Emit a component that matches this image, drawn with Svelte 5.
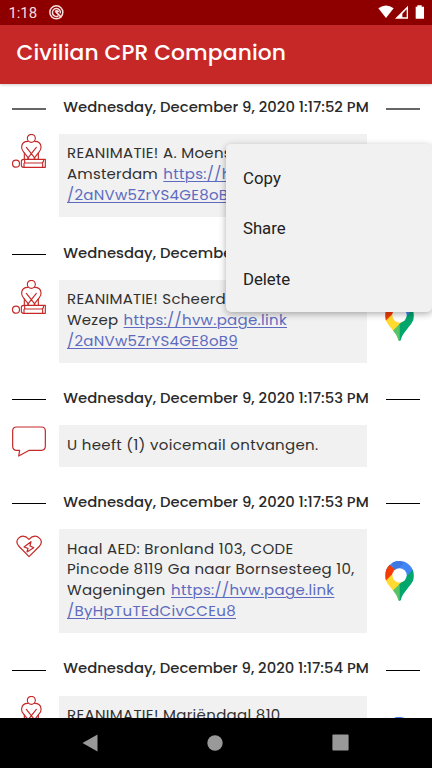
<script>
  const url = 'https://hvw.page.link';
  const entries = [
    {
      time: '1:17:52 PM', icon: 'cpr', pin: true, faded: true,
      lines: [
        [{ t: 'REANIMATIE! A. Moens', w: 165 }],
        [{ t: 'Amsterdam', w: 91 }, { t: url, w: 163.4, link: true }],
        [{ t: '/2aNVw5ZrYS4GE8oB9', w: 171, link: true }]
      ]
    },
    {
      time: '1:17:53 PM', icon: 'cpr', pin: true,
      lines: [
        [{ t: 'REANIMATIE! Scheerd', w: 159 }],
        [{ t: 'Wezep', w: 51.3 }, { t: url, w: 163.4, link: true }],
        [{ t: '/2aNVw5ZrYS4GE8oB9', w: 171, link: true }]
      ]
    },
    {
      time: '1:17:53 PM', icon: 'chat', pin: false,
      lines: [[{ t: 'U heeft (1) voicemail ontvangen.', w: 251.5 }]]
    },
    {
      time: '1:17:53 PM', icon: 'heart', pin: true,
      lines: [
        [{ t: 'Haal AED: Bronland 103, CODE', w: 226.5 }],
        [{ t: 'Pincode 8119 Ga naar Bornsesteeg 10,', w: 287.5 }],
        [{ t: 'Wageningen', w: 98.7 }, { t: url, w: 163.4, link: true }],
        [{ t: '/ByHpTuTEdCivCCEu8', w: 169, link: true }]
      ]
    },
    {
      time: '1:17:54 PM', icon: 'cpr', pin: true,
      lines: [
        [{ t: 'REANIMATIE! Mariëndaal 810', w: 213.5 }],
        [],
        []
      ]
    }
  ];

  // Tracks the text out so that it fills the given width.
  function fit(node, width) {
    const natural = node.getBoundingClientRect().width;
    const spacing = (width - natural) / node.textContent.length;
    node.style.letterSpacing = `${spacing}px`;
  }
</script>

<div class="screen">
  <div class="status">
    <span class="clock" use:fit={28.5}>1:18</span>
    <svg class="badge" viewBox="0 0 45 45">
      <g fill="none" stroke="#f6dede">
        <circle cx="22" cy="22" r="19.5" stroke-width="4.500" />
        <path d="M28 33A12 12 0 1 1 34 25" stroke-width="4.500" />
        <path d="M18 20Q24 15 29 21M20 20L37 37" stroke-width="5" />
      </g>
    </svg>
    <svg class="signals" viewBox="0 0 140 44">
      <path fill="#fff" d="M1 10Q24-7 47 10L24 39Z" />
      <path fill="#fff" fill-rule="evenodd" d="M90 2V41H51ZM86 13L73 26V37H86Z" />
      <path fill="#fff" d="M113 5H118V1H131V5H138V41H113Z" />
    </svg>
  </div>
  <header><h1><span use:fit={269.5}>Civilian CPR Companion</span></h1></header>

  <main>
    {#each entries as e}
      <section>
        <div class="date">
          <i class:faded={e.faded}></i>
          <span use:fit={305.5}>Wednesday, December 9, 2020 {e.time}</span>
          <i class:faded={e.faded}></i>
        </div>
        <div class="row">
          <div class="icon">
            {#if e.icon === 'cpr'}
              <svg width="34" height="34" viewBox="0 0 102 102">
                <g fill="none" stroke="#c62828" stroke-width="3.400" stroke-linejoin="round" stroke-linecap="round">
                  <circle cx="58" cy="13" r="12" />
                  <path d="M48 22Q30 22 29 38Q28 46 34 53L50 73M68 22Q86 22 87 38Q88 46 82 53L66 73" />
                  <path d="M43 40L58 59L73 40M58 59L69 73M58 59L47 73M37 57V74M79 57V74" />
                  <circle cx="12" cy="89" r="10.500" />
                  <path d="M35 76H100V100H35Q28 100 28 93V83Q28 76 35 76Z" />
                  <path d="M38 77V87H89Q94 87 95 78M36 88V99M92 89V99" />
                </g>
              </svg>
            {:else if e.icon === 'chat'}
              <svg width="34" height="32" viewBox="0 0 102 96">
                <path d="M14 6H88Q100 6 100 18V64Q100 76 88 76H52L20 93L23 76H14Q2 76 2 64V18Q2 6 14 6Z" fill="none" stroke="#c62828" stroke-width="3.600" stroke-linejoin="round" />
              </svg>
            {:else}
              <svg width="34" height="30" viewBox="0 0 102 90">
                <g fill="none" stroke="#c62828" stroke-width="3.600" stroke-linejoin="round">
                  <path d="M51 83L20 51Q10 38 19 28Q34 14 51 31Q68 14 83 28Q93 38 83 51Z" />
                  <path d="M57 38L36 54L48 58L45 69L65 56L54 51Z" />
                </g>
              </svg>
            {/if}
          </div>
          <div class="card">
            {#each e.lines as line}
              <div class="line">
                {#each line as part}
                  {#if part.link}
                    <a href={url} use:fit={part.w}>{part.t}</a>
                  {:else}
                    <span use:fit={part.w}>{part.t}</span>
                  {/if}
                {/each}
              </div>
            {/each}
          </div>
          {#if e.pin}
            <svg class="pin" viewBox="0 0 86 120">
              <defs>
                <clipPath id="drop">
                  <path d="M43 0C67 0 86 19 86 43C86 62 77 70 66 84C55 98 49 106 47 117Q43 123 39 117C37 106 31 98 20 84C9 70 0 62 0 43C0 19 19 0 43 0Z" />
                </clipPath>
              </defs>
              <g clip-path="url(#drop)">
                <path fill="#4285f4" d="M0 0H86V60H0Z" />
                <path fill="#3b78e0" d="M18 0H43L56 5L36 27H28Z" />
                <path fill="#f43b05" d="M0 0H2L30 27L36 30L0 63Z" />
                <path fill="#ffda2f" d="M0 61L30 31L60 52L43 71L22 92L0 80Z" />
                <path fill="#57c467" d="M20 92L44 68V120H20Z" />
                <path fill="#00a66c" d="M86 22V120H43V70Z" />
              </g>
              <circle cx="43" cy="43" r="21.500" fill="#fff" />
            </svg>
          {/if}
        </div>
      </section>
    {/each}
  </main>

  <nav>
    <svg width="16" height="18" viewBox="0 0 16 18"><path d="M15.500 .5V17.500L.5 9Z" fill="#999" /></svg>
    <svg width="16" height="16" viewBox="0 0 16 16"><circle cx="8" cy="8" r="7.700" fill="#999" /></svg>
    <svg width="17" height="17" viewBox="0 0 17 17"><rect x=".4" y=".4" width="16.200" height="16.200" rx="1" fill="#999" /></svg>
  </nav>

  <div class="menu">
    <div><span use:fit={38}>Copy</span></div>
    <div><span use:fit={42.5}>Share</span></div>
    <div><span use:fit={47}>Delete</span></div>
  </div>
</div>

<style>
  :global(body) { margin: 0; background: #fff; }
  .screen {
    position: relative;
    width: 432px;
    height: 768px;
    overflow: hidden;
    display: flex;
    flex-direction: column;
    background: #fff;
    font-family: Poppins, Inter, sans-serif;
    color: #2a2a2a;
  }
  .screen span, .screen a { white-space: pre; }
  .status {
    flex: none;
    height: 25px;
    background: #8e0000;
    display: flex;
    align-items: center;
    padding: 0 7px 0 8.500px;
    box-sizing: border-box;
  }
  .clock { font: 15px/25px Roboto, sans-serif; color: #f6dede; padding-top: 2px; }
  .badge { width: 15px; height: 15px; margin-left: 11.500px; }
  .signals { width: 46.700px; height: 14.700px; margin-left: auto; }
  header {
    flex: none;
    height: 59px;
    background: #c62828;
    box-shadow: 0 1px 3px rgba(0, 0, 0, .2);
    z-index: 1;
    padding-left: 16.500px;
  }
  h1 { margin: 0; font-size: 21.800px; line-height: 56px; font-weight: 500; color: #fff; }
  main { flex: 1; min-height: 0; overflow: hidden; }
  section { margin-bottom: 12.200px; }
  .date {
    height: 50.200px;
    display: flex;
    align-items: flex-start;
    justify-content: space-between;
    padding: 0 12.200px;
    font-size: 14.800px;
    line-height: 46px;
    font-weight: 500;
  }
  .date i { width: 34px; height: 1px; margin-top: 24.200px; background: #000; }
  .date i.faded { height: 2px; margin-top: 24px; background: #666; }
  .row { display: flex; align-items: center; }
  .icon { width: 34px; align-self: flex-start; margin: 0 13px 0 12px; display: flex; }
  .card {
    width: 308px;
    box-sizing: border-box;
    padding: 9.300px 0 11.500px 8px;
    background: #f1f1f1;
    font-size: 15px;
    font-weight: 400;
    color: #303030;
  }
  .line { height: 20.800px; line-height: 20.800px; display: flex; gap: 5.300px; }
  a { color: #5c6bc0; text-decoration: underline; text-decoration-thickness: 1px; text-underline-offset: 2px; }
  .pin { width: 29px; height: 40px; margin-left: 18.200px; }
  nav {
    flex: none;
    height: 50.500px;
    background: #000;
    display: flex;
    align-items: center;
    justify-content: space-between;
    padding: 0 83.500px 0 82px;
    box-sizing: border-box;
  }
  nav svg:nth-child(2) { position: relative; left: .7px; }
  .menu {
    position: absolute;
    z-index: 2;
    left: 226px;
    top: 144px;
    width: 206px;
    height: 168px;
    padding: 9px 0 8px 17px;
    box-sizing: border-box;
    background: #f1f1f1;
    border-radius: 5px;
    box-shadow: 0 2px 7px rgba(0, 0, 0, .32);
    font: 16.800px/50.300px Roboto, sans-serif;
    color: #222;
  }
</style>
